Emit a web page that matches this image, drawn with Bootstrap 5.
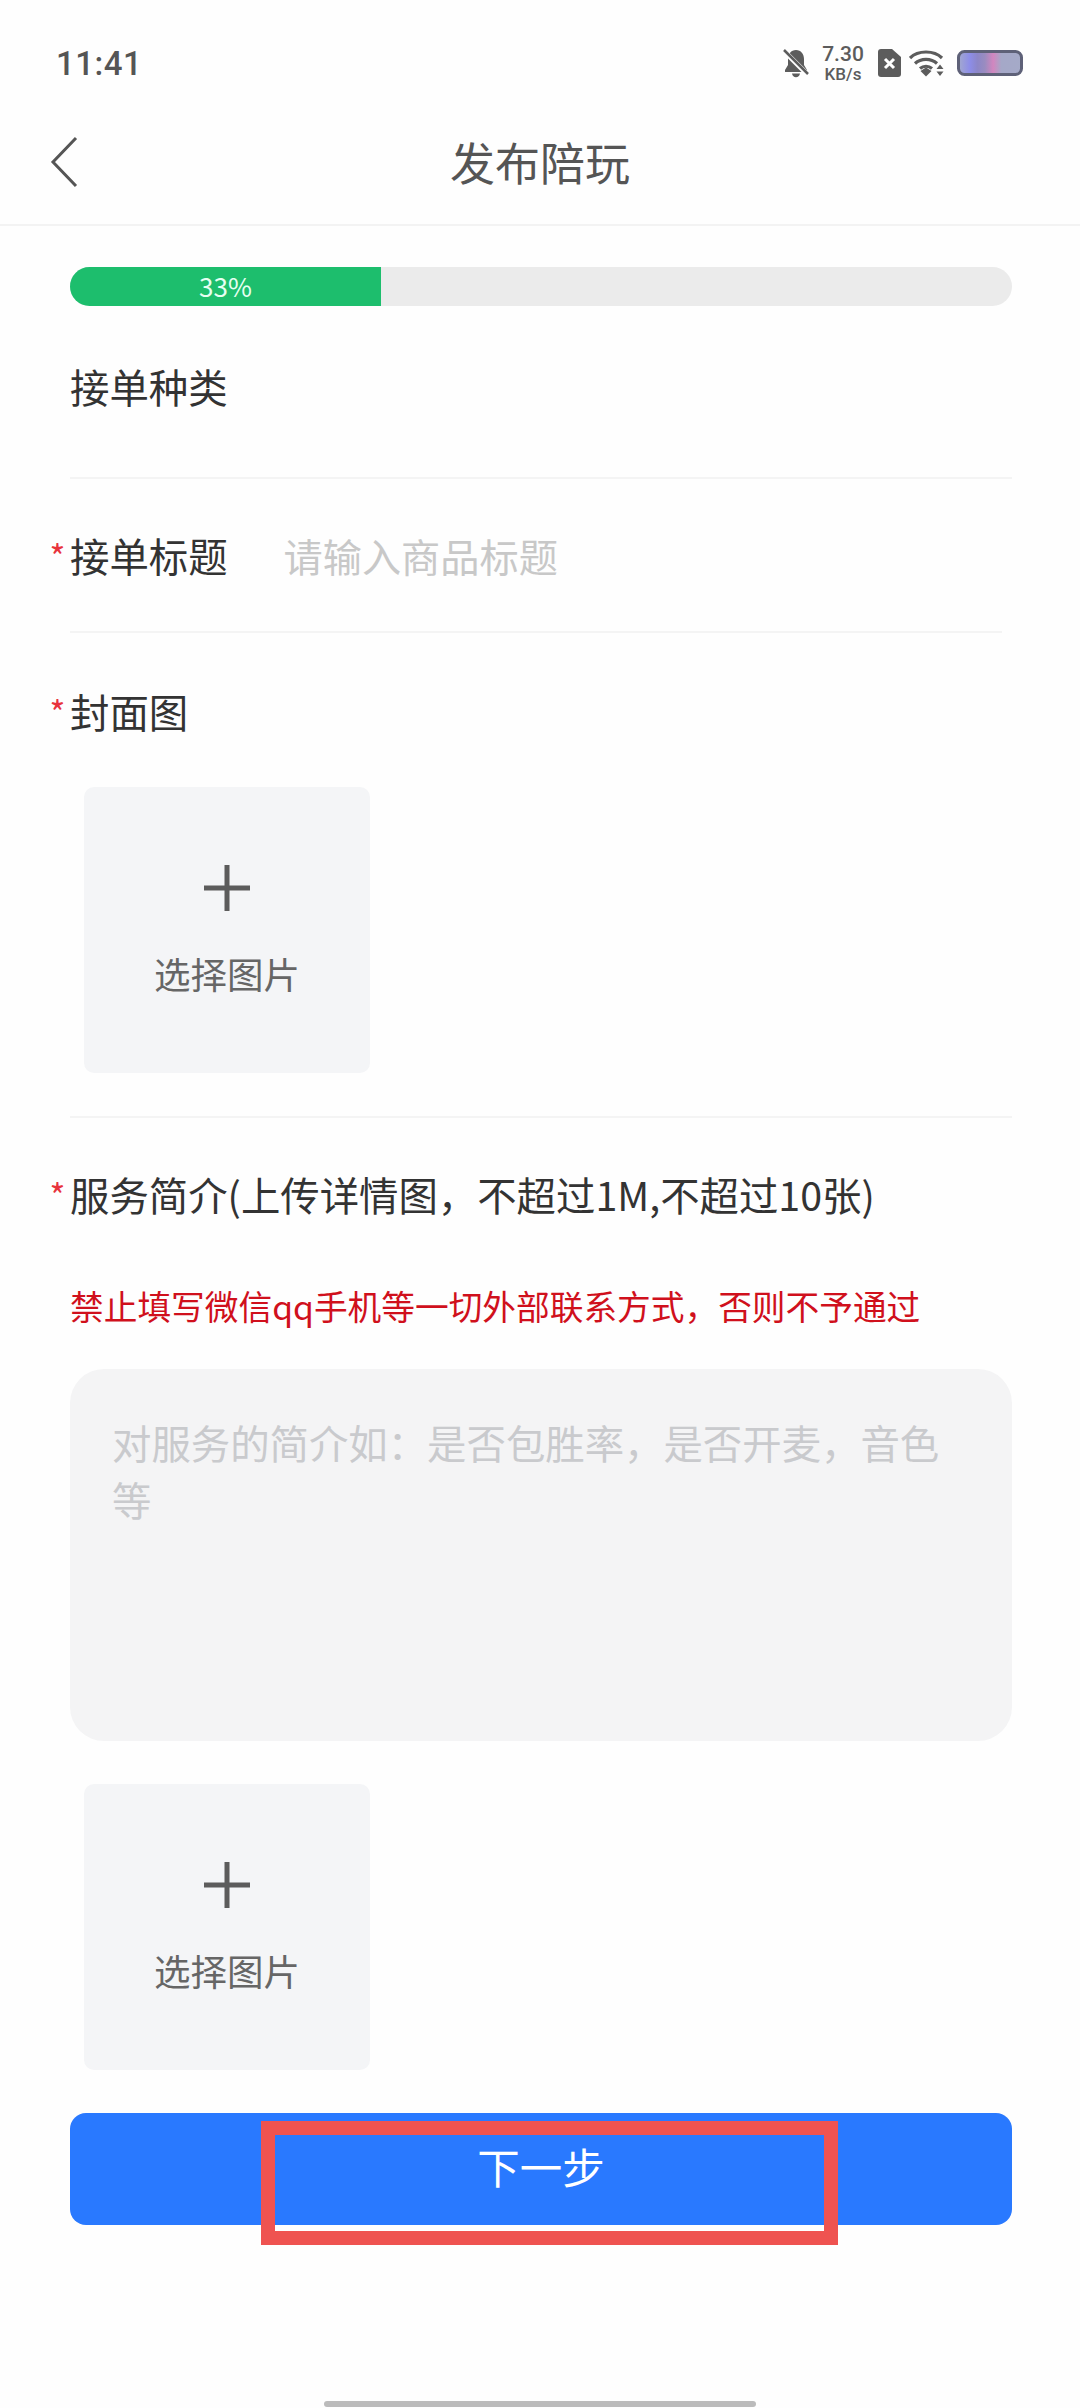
<!DOCTYPE html>
<html lang="zh-CN">
<head>
    <meta charset="UTF-8">
    <meta name="viewport" content="width=device-width, initial-scale=1.0">
    <title>发布陪玩</title>
    <link href="https://cdn.jsdelivr.net/npm/bootstrap@5.3.0/dist/css/bootstrap.min.css" rel="stylesheet">
    <style>
        html, body { margin: 0; background: #fefefe; }
        body {
            width: 1080px;
            height: 2408px;
            overflow: hidden;
            font-family: "Noto Sans CJK SC", "Noto Sans", sans-serif;
            color: #333;
        }
        .status-row { height: 100px; padding: 0 57px 17px 56px; }
        .status-time { padding-bottom: 3px; font-family: Roboto, sans-serif; font-size: 33px; font-weight: 500; color: #555; letter-spacing: .5px; line-height: 1; }
        .net-speed { width: 44px; margin: 0 13px 0 11px; font-family: Roboto, sans-serif; color: #5c5c5c; text-align: center; font-weight: 500; }
        .net-speed div:first-child { font-size: 21px; line-height: 22px; }
        .net-speed div:last-child { font-size: 17px; line-height: 18px; }

        .nav-row { height: 126px; border-bottom: 2px solid #f3f3f3; }
        .back-arrow { position: absolute; left: 50px; top: 36px; }
        .nav-title { font-size: 45px; color: #555; line-height: 64px; padding-top: 30px; }

        .form-wrap { padding: 41px 68px 0 70px; }
        .progress.publish-bar { height: 39px; border-radius: 20px; background: #ebebeb; font-size: 26px; }
        .publish-bar .progress-bar { padding-bottom: 2px; background: #1dbe6d; color: #e6fff2; overflow: hidden; }

        .field-row { border-bottom: 2px solid #f4f4f4; }
        .field-label { font-size: 39.4px; line-height: 56px; color: #333; white-space: nowrap; }
        .req-star { display: inline-block; width: 25px; margin-left: -25px; color: #e8333c; font-size: 34px; line-height: 1; vertical-align: 2px; text-align: center; }
        .kind-row { height: 173px; padding-top: 52px; }
        .title-row { height: 154px; padding-top: 48px; margin-right: 10px; }
        .cover-row { height: 485px; padding-top: 50px; }

        .title-input.form-control {
            height: 56px;
            padding: 0;
            margin-left: 56px;
            border: 0;
            border-radius: 0;
            background: transparent;
            font-size: 39.2px;
            line-height: 56px;
        }
        .title-input.form-control::placeholder { color: #c8c8c8; }

        .pick-box {
            width: 286px;
            height: 286px;
            margin-left: 14px;
            border-radius: 10px;
            background: #f4f5f7;
            color: #666;
            font-size: 36.500px;
            line-height: 50px;
        }
        .pick-box svg { display: block; margin-top: 78px; margin-bottom: 38px; }
        .cover-box { margin-top: 48px; }
        .detail-box { margin-top: 43px; }

        .intro-wrap { padding-top: 48px; }
        .warn-text { margin-top: 56px; font-size: 33.700px; line-height: 56px; color: #d0101c; white-space: nowrap; }
        .intro-area.form-control {
            display: block;
            height: 372px;
            margin-top: 35px;
            padding: 44px 66px 0 42px;
            border: 0;
            border-radius: 34px;
            background: #f4f4f5;
            font-size: 39.4px;
            line-height: 57px;
            resize: none;
        }
        .intro-area.form-control::placeholder { color: #c9cacd; }

        .next-wrap { margin-top: 43px; }
        .next-btn.btn {
            height: 112px;
            padding: 0 0 6px 0;
            border: 0;
            border-radius: 16px;
            background: #2979ff;
            color: #fff;
            font-size: 42.5px;
        }
        .mark-rect { position: absolute; left: 191px; top: 8px; width: 577px; height: 124px; border: 14px solid #ef5350; pointer-events: none; }

        .home-pill { position: absolute; left: 324px; top: 2401px; width: 432px; height: 6px; border-radius: 3px; background: #bbb; }
    </style>
</head>
<body class="position-relative">
    <!-- status bar -->
    <div class="status-row d-flex align-items-end justify-content-between">
        <div class="status-time">11:41</div>
        <div class="d-flex align-items-center">
            <svg width="28" height="30" viewBox="0 0 28 30">
                <path d="M14 2c-5 0-8 4-8 9v6l-3 5v2h22v-2l-3-5v-6c0-5-3-9-8-9zM10 25.500c.5 2.500 2 3.800 4 3.800s3.500-1.300 4-3.800z" fill="#5c5c5c"/>
                <path d="M2 3 26 27" stroke="#fefefe" stroke-width="5"/>
                <path d="M2 2 26 26" stroke="#5c5c5c" stroke-width="2.500"/>
            </svg>
            <div class="net-speed">
                <div>7.30</div>
                <div>KB/s</div>
            </div>
            <svg width="23" height="28" viewBox="0 0 23 28">
                <path d="M3 0h11l9 8v17a3 3 0 0 1-3 3H3a3 3 0 0 1-3-3V3a3 3 0 0 1 3-3z" fill="#5c5c5c"/>
                <path d="M7 10 16 19M16 10 7 19" stroke="#fff" stroke-width="3"/>
            </svg>
            <svg class="ms-2 me-2" width="36" height="28" viewBox="0 0 36 28">
                <g fill="none" stroke="#5c5c5c" stroke-width="3.200">
                    <path d="M1 9C9 1 25 1 33 9"/>
                    <path d="M6 14.500C12 9 22 9 28 14.500"/>
                    <path d="M11 19.500C14.500 16.500 19.500 16.500 23 19.500"/>
                </g>
                <path d="M11.500 22 17 18.500 22.500 22 17 27.500z" fill="#5c5c5c"/>
                <path d="M31 15.500l3.500 4.500h-7zM31 27l-3.500-4.500h7z" fill="#5c5c5c"/>
            </svg>
            <svg class="ms-1" width="66" height="26" viewBox="0 0 66 26">
                <defs>
                    <linearGradient id="batFill">
                        <stop offset="0" stop-color="#a3a9ce"/>
                        <stop offset=".18" stop-color="#8d8de8"/>
                        <stop offset=".3" stop-color="#8c86c8"/>
                        <stop offset=".42" stop-color="#9a8cc0"/>
                        <stop offset=".55" stop-color="#d286bf"/>
                        <stop offset=".68" stop-color="#a5a8c8"/>
                        <stop offset="1" stop-color="#a5aac8"/>
                    </linearGradient>
                </defs>
                <rect x="1.500" y="1.500" width="63" height="23" rx="6" fill="url(#batFill)" stroke="#5e6178" stroke-width="3"/>
            </svg>
        </div>
    </div>

    <!-- title bar -->
    <div class="nav-row position-relative text-center">
        <svg class="back-arrow" width="30" height="52" viewBox="0 0 30 52">
            <path d="M26 2 3 26 26 50" fill="none" stroke="#555" stroke-width="3"/>
        </svg>
        <div class="nav-title">发布陪玩</div>
    </div>

    <div class="form-wrap">
        <div class="progress publish-bar">
            <div class="progress-bar" style="width: 33%">33%</div>
        </div>

        <div class="field-row kind-row">
            <div class="field-label">接单种类</div>
        </div>

        <div class="field-row title-row d-flex align-items-start">
            <div class="field-label"><span class="req-star">*</span>接单标题</div>
            <input type="text" class="form-control title-input" placeholder="请输入商品标题">
        </div>

        <div class="field-row cover-row">
            <div class="field-label"><span class="req-star">*</span>封面图</div>
            <div class="pick-box cover-box d-flex flex-column align-items-center">
                <svg width="46" height="46" viewBox="0 0 46 46"><path d="M23 0v46M0 23h46" stroke="#5c5c5c" stroke-width="5" stroke-linecap="round"/></svg>
                <div>选择图片</div>
            </div>
        </div>

        <div class="intro-wrap">
            <div class="field-label"><span class="req-star">*</span>服务简介(上传详情图，不超过1M,不超过10张)</div>
            <div class="warn-text">禁止填写微信qq手机等一切外部联系方式，否则不予通过</div>
            <textarea class="form-control intro-area" placeholder="对服务的简介如：是否包胜率，是否开麦，音色等"></textarea>
            <div class="pick-box detail-box d-flex flex-column align-items-center">
                <svg width="46" height="46" viewBox="0 0 46 46"><path d="M23 0v46M0 23h46" stroke="#5c5c5c" stroke-width="5" stroke-linecap="round"/></svg>
                <div>选择图片</div>
            </div>
        </div>

        <div class="next-wrap position-relative">
            <button class="btn next-btn w-100">下一步</button>
            <div class="mark-rect"></div>
        </div>
    </div>

    <div class="home-pill"></div>

    <script src="https://cdn.jsdelivr.net/npm/bootstrap@5.3.0/dist/js/bootstrap.bundle.min.js"></script>
</body>
</html>
